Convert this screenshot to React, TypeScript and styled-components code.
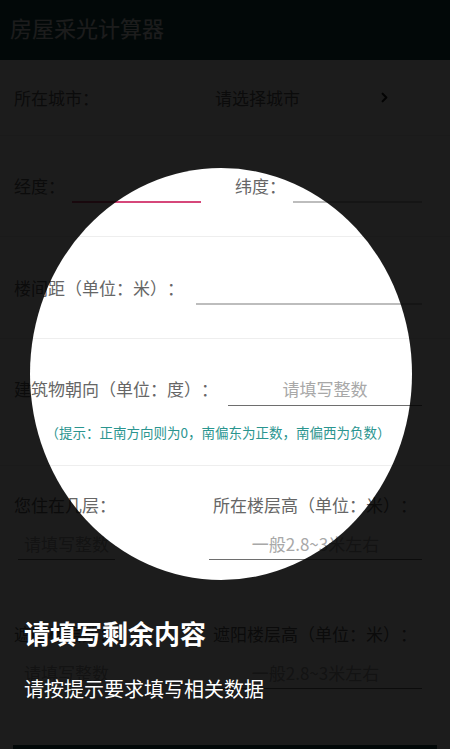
import styled, { createGlobalStyle } from 'styled-components';
import { ChevronRight } from 'lucide-react';

const GlobalStyle = createGlobalStyle`
	html, body {
		margin: 0;
		padding: 0;
		background: #1b1b1b;
	}
	body {
		font-family: 'Noto Sans CJK SC', 'Noto Sans', sans-serif;
		text-spacing-trim: space-all;
	}
`;

function App() {
	return (
		<>
			<GlobalStyle />
			<Page>
				<AppBar>
					<AppTitle>房屋采光计算器</AppTitle>
				</AppBar>

				<CityRow>
					<Label>所在城市：</Label>
					<CityPicker>
						<span>请选择城市</span>
						<ChevronRight size={15} strokeWidth={3.5} color="#222" />
					</CityPicker>
				</CityRow>
				<Divider />

				<FormRow $height={100} $gap={7}>
					<HalfField>
						<Label>经度：</Label>
						<Field $focused />
					</HalfField>
					<HalfField>
						<Label>纬度：</Label>
						<Field />
					</HalfField>
				</FormRow>
				<Divider />

				<FormRow $height={101} $gap={12}>
					<Label>楼间距（单位：米）：</Label>
					<Field />
				</FormRow>
				<Divider />

				<OrientationBlock>
					<InlineField>
						<Label>建筑物朝向（单位：度）：</Label>
						<Field $thin>
							<Hint>请填写整数</Hint>
						</Field>
					</InlineField>
					<Tip>（提示：正南方向则为0，南偏东为正数，南偏西为负数）</Tip>
				</OrientationBlock>
				<Divider />

				<FloorBlock $top={26} $bottom={32}>
					<FloorColumn $width={195}>
						<Label>您住在几层：</Label>
						<ShortField>
							<Hint>请填写整数</Hint>
						</ShortField>
					</FloorColumn>
					<FloorColumn>
						<Label $indent>所在楼层高（单位：米）：</Label>
						<Field $thin>
							<Hint>一般2.8~3米左右</Hint>
						</Field>
					</FloorColumn>
				</FloorBlock>

				<FloorBlock $top={29} $bottom={20}>
					<FloorColumn $width={195}>
						<Label>遮阳楼层数：</Label>
						<ShortField $bare>
							<Hint>请填写整数</Hint>
						</ShortField>
					</FloorColumn>
					<FloorColumn>
						<Label $indent>遮阳楼层高（单位：米）：</Label>
						<Field $thin>
							<Hint>一般2.8~3米左右</Hint>
						</Field>
					</FloorColumn>
				</FloorBlock>

				<SubmitButton aria-label="计算" />

				{/* guide overlay: dim everything except the spotlight */}
				<Spotlight />
				<GuideText>
					<GuideTitle>请填写剩余内容</GuideTitle>
					<GuideDesc>请按提示要求填写相关数据</GuideDesc>
				</GuideText>
			</Page>
		</>
	);
}

export default App;

const Page = styled.div`
	width: 450px;
	height: 749px;
	background: #fff;
	position: relative;
	overflow: hidden;
	display: flex;
	flex-flow: column nowrap;
`;

const AppBar = styled.div`
	height: 60px;
	flex-shrink: 0;
	background: #1a4b4b;
	display: flex;
	align-items: flex-start;
	padding: 12px 0 0 10px;
	box-sizing: border-box;
`;

const AppTitle = styled.h1`
	margin: 0;
	font-size: 22px;
	line-height: 30px;
	font-weight: 400;
	color: #fff;
`;

const CityRow = styled.div`
	height: 75px;
	flex-shrink: 0;
	display: flex;
	align-items: center;
	padding: 0 28px 0 14px;
`;

const CityPicker = styled.div`
	margin-left: auto;
	width: 177px;
	display: flex;
	align-items: center;
	justify-content: space-between;
	font-size: 17px;
	color: #666;
	margin-right: 30px;
`;

const Divider = styled.div`
	height: 1px;
	flex-shrink: 0;
	background: #eeeeee;
`;

const Label = styled.span<{ $indent?: boolean }>`
	font-size: 17px;
	line-height: 26px;
	color: #666;
	white-space: nowrap;
	padding-left: ${({ $indent }) => ($indent ? '4px' : '0')};
`;

const FormRow = styled.div<{ $height: number; $gap: number }>`
	height: ${({ $height }) => $height}px;
	flex-shrink: 0;
	display: flex;
	align-items: center;
	gap: ${({ $gap }) => $gap}px;
	padding: 0 28px 0 14px;
`;

const HalfField = styled.div`
	flex: 1;
	display: flex;
	align-items: center;
	gap: 7px;

	& + & {
		margin-left: 27px;
	}
`;

const Field = styled.div<{ $focused?: boolean; $thin?: boolean }>`
	flex: 1;
	height: 32px;
	display: flex;
	align-items: center;
	justify-content: center;
	border-bottom: ${({ $thin }) => ($thin ? '1px solid #6e6e6e' : '2px solid #bdbdbd')};
	border-bottom-color: ${({ $focused }) => ($focused ? '#d6477a' : undefined)};
`;

const ShortField = styled.div<{ $bare?: boolean }>`
	width: 97px;
	height: 31px;
	margin-left: 4px;
	display: flex;
	align-items: center;
	justify-content: center;
	border-bottom: 1px solid ${({ $bare }) => ($bare ? 'transparent' : '#6e6e6e')};
`;

const Hint = styled.span`
	font-size: 17px;
	line-height: 24px;
	color: #a8a8a8;
	white-space: nowrap;
`;

const OrientationBlock = styled.div`
	height: 126px;
	flex-shrink: 0;
	display: flex;
	flex-flow: column nowrap;
	padding: 30px 28px 0 14px;
	box-sizing: border-box;
`;

const InlineField = styled.div`
	height: 40px;
	display: flex;
	align-items: center;
	gap: 10px;
`;

const Tip = styled.p`
	margin: 14px 0 0;
	font-size: 13.5px;
	line-height: 18px;
	color: #2a958f;
	text-align: center;
	white-space: nowrap;
`;

const FloorBlock = styled.div<{ $top: number; $bottom: number }>`
	flex-shrink: 0;
	display: flex;
	padding: ${({ $top, $bottom }) => `${$top}px 28px ${$bottom}px 14px`};
`;

const FloorColumn = styled.div<{ $width?: number }>`
	display: flex;
	flex-flow: column nowrap;
	gap: 10px;
	${({ $width }) => ($width ? `width: ${$width}px;` : 'flex: 1;')}
`;

const SubmitButton = styled.button`
	margin: auto 13px -40px;
	height: 44px;
	flex-shrink: 0;
	border: none;
	background: #1a4b4b;
`;

const Spotlight = styled.div`
	position: absolute;
	left: 30px;
	top: 168px;
	width: 382px;
	height: 412px;
	border-radius: 50%;
	box-shadow: 0 0 0 1400px rgba(0, 0, 0, 0.89);
	pointer-events: none;
`;

const GuideText = styled.div`
	position: absolute;
	left: 24px;
	top: 615px;
	display: flex;
	flex-flow: column nowrap;
	gap: 24px;
	color: #fff;
`;

const GuideTitle = styled.h2`
	margin: 0;
	font-size: 26px;
	line-height: 36px;
	font-weight: 700;
`;

const GuideDesc = styled.p`
	margin: 0;
	font-size: 20px;
	line-height: 28px;
`;
